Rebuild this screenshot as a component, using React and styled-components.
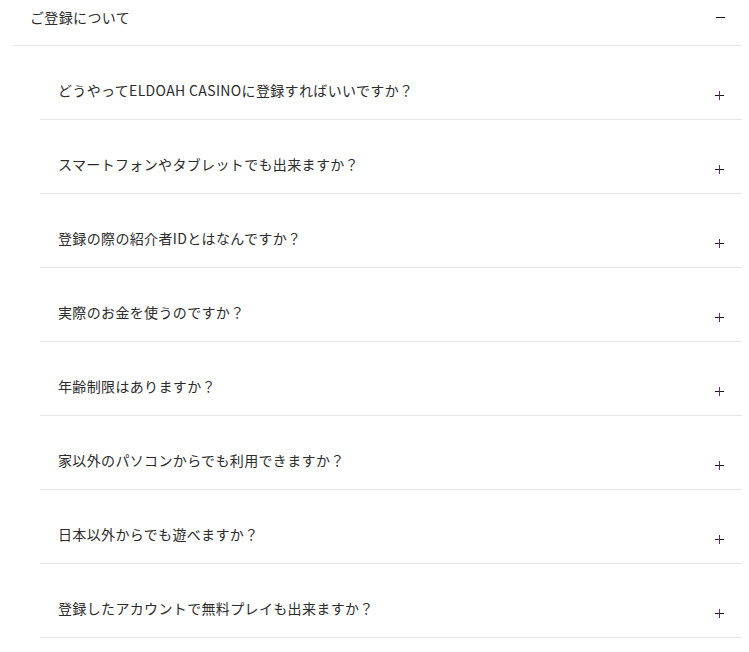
import React from "react";
import styled, { createGlobalStyle } from "styled-components";

const Global = createGlobalStyle`
  html, body { margin: 0; padding: 0; background: #fff; }
  body { font-family: "Segoe UI", "Noto Sans CJK JP", "Noto Sans", sans-serif; color: #2b2b2b; letter-spacing: 0.35px; }
`;

const Section = styled.section`
  margin: 0 7px 0 13px;
`;

const Header = styled.div`
  display: flex;
  align-items: center;
  justify-content: space-between;
  height: 46px;
  box-sizing: border-box;
  padding: 0 17px 11px 17px;
  border-bottom: 1px solid #e6e6e6;
  font-size: 14px;
  line-height: 18px;
`;

const List = styled.ul`
  list-style: none;
  margin: 0 0 0 27px;
  padding: 0;
`;

const Row = styled.li`
  display: flex;
  justify-content: space-between;
  align-items: flex-start;
  padding: 34px 18px 19px 18px;
  border-bottom: 1px solid #e6e6e6;
  font-size: 14px;
  line-height: 20px;
`;

const Sign = styled.span`
  position: relative;
  flex: none;
  width: 9px;
  height: 9px;
  margin-top: ${(p) => p.$offset}px;
  &::before {
    content: "";
    position: absolute;
    left: 0;
    right: 0;
    top: 4px;
    height: 1px;
    background: #1a1a1a;
  }
  &::after {
    content: "";
    display: ${(p) => (p.$open ? "none" : "block")};
    position: absolute;
    top: 0;
    bottom: 0;
    left: 4px;
    width: 1px;
    background: #6e1f78;
  }
`;

const questions = [
  "どうやってELDOAH CASINOに登録すればいいですか？",
  "スマートフォンやタブレットでも出来ますか？",
  "登録の際の紹介者IDとはなんですか？",
  "実際のお金を使うのですか？",
  "年齢制限はありますか？",
  "家以外のパソコンからでも利用できますか？",
  "日本以外からでも遊べますか？",
  "登録したアカウントで無料プレイも出来ますか？",
];

export default function App() {
  return (
    <>
      <Global />
      <Section>
        <Header>
          <span>ご登録について</span>
          <Sign $open $offset={0} />
        </Header>
        <List>
          {questions.map((q) => (
            <Row key={q}>
              <span>{q}</span>
              <Sign $offset={11} />
            </Row>
          ))}
        </List>
      </Section>
    </>
  );
}
